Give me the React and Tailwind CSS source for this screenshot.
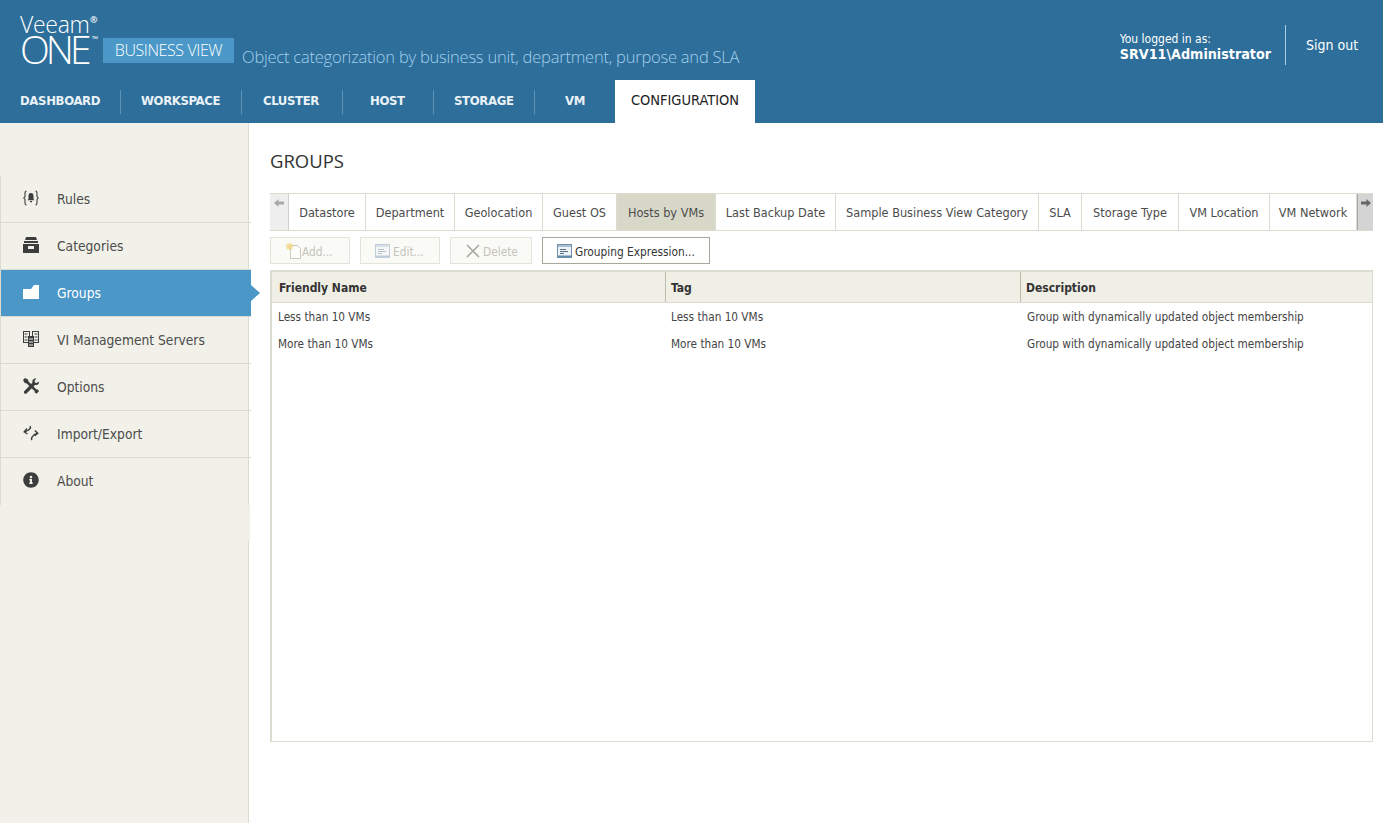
import React from 'react';
import { FaInfoCircle } from 'react-icons/fa';

const tahoma = { fontFamily: '"DejaVu Sans", sans-serif', fontStretch: 'condensed' };
const light = { fontFamily: '"Open Sans", sans-serif', fontStretch: 'normal' };

const navItems = [
  { label: 'DASHBOARD', w: 'w-[121px]', pad: 'pl-5' },
  { label: 'WORKSPACE', w: 'w-[121px]', pad: 'pl-5' },
  { label: 'CLUSTER', w: 'w-[101px]', pad: 'pl-[21px]' },
  { label: 'HOST', w: 'w-[91px]', pad: 'pl-[27px]' },
  { label: 'STORAGE', w: 'w-[101px]', pad: 'pl-5' },
  { label: 'VM', w: 'w-[80px]', pad: 'pl-[30px]', last: true },
];

const tabs = [
  { label: 'Datastore', w: 'w-[77px]' },
  { label: 'Department', w: 'w-[89px]' },
  { label: 'Geolocation', w: 'w-[88px]' },
  { label: 'Guest OS', w: 'w-[74px]' },
  { label: 'Hosts by VMs', w: 'w-[99px]', active: true },
  { label: 'Last Backup Date', w: 'w-[120px]' },
  { label: 'Sample Business View Category', w: 'w-[203px]' },
  { label: 'SLA', w: 'w-[43px]' },
  { label: 'Storage Type', w: 'w-[97px]' },
  { label: 'VM Location', w: 'w-[91px]' },
  { label: 'VM Network', w: 'w-[87px]' },
];

const RulesIcon = () => (
  <svg width="16" height="16" viewBox="0 0 16 16" fill="none">
    <path d="M3.5 1C2 1 2 2 2 3.500v3L.8 8 2 9.500v3C2 14 2 15 3.500 15M12.500 1C14 1 14 2 14 3.500v3L15.200 8 14 9.500v3c0 1.500 0 2.500-1.500 2.500" stroke="#3d3d3d" strokeWidth="1.100" />
    <path d="M8 3c1.800 0 2.500 1.200 2.500 3v3l.8 1.200H4.700L5.500 9V6c0-1.800.7-3 2.500-3zM7 11h2v1.300H7z" fill="#3d3d3d" />
  </svg>
);

const CategoriesIcon = () => (
  <svg width="16" height="16" viewBox="0 0 16 16">
    <path d="M3 0h10l1 3H2zM1 4h14v2H1zM0 7h16v9H0z" fill="#3d3d3d" />
    <rect x="5" y="9" width="6" height="3" fill="#f2f1e9" />
  </svg>
);

const FolderIcon = () => (
  <svg width="16" height="14" viewBox="0 0 16 14">
    <path d="M0 4H8L11 0H16V14H0Z" fill="#fff" />
  </svg>
);

const ServersIcon = () => (
  <svg width="16" height="16" viewBox="0 0 16 16" fill="none" stroke="#3d3d3d">
    <rect x=".5" y=".5" width="6" height="11" />
    <rect x="9.500" y=".5" width="6" height="11" />
    <rect x="5" y="5" width="6" height="11" fill="#3d3d3d" stroke="none" />
    <path d="M6 8h4M6 11h4M6 14h4" stroke="#f2f1e9" />
    <path d="M1.500 3h3M1.500 6h3M1.500 9h3M11.500 3h3M11.500 6h3M11.500 9h3" />
  </svg>
);

const ToolsIcon = () => (
  <svg width="16" height="16" viewBox="0 0 16 16" fill="#3d3d3d">
    <path d="M0 2l2-2 3 1.500.5 2L13.500 11.500l1-.3 1.500 2-2.500 2.500-2-1.500.3-1L3.700 5.500l-2-.5z" />
    <path d="M15.800 3.500c.4 1.500-.2 2.800-1.500 3.300-.7.300-1.300.2-2 0L3.800 15.300c-.7.700-1.700.7-2.400.1-.7-.7-.7-1.700 0-2.400L9.500 4.500c-.3-1-.2-1.800.4-2.700C10.800.500 12.200.200 13.500.500L11.500 2.800l.5 1.800 1.800.5z" />
  </svg>
);

const ImportIcon = () => (
  <svg width="16" height="16" viewBox="0 0 16 16" fill="none" stroke="#3d3d3d" strokeWidth="1.400">
    <path d="M7 1C8.500 3 6 5.500 1.200 6.800M4 3.500L1.200 6.800 4.500 9" />
    <path d="M9 15C7.500 13 10 9.500 14.800 8.200M11.800 5.500L14.800 8.200 11.800 10.800" />
  </svg>
);

const InfoIcon = () => <FaInfoCircle className="w-4 h-4 text-[#3d3d3d]" />;

const sideItems = [
  { label: 'Rules', icon: <RulesIcon /> },
  { label: 'Categories', icon: <CategoriesIcon /> },
  { label: 'Groups', icon: <FolderIcon />, active: true },
  { label: 'VI Management Servers', icon: <ServersIcon /> },
  { label: 'Options', icon: <ToolsIcon /> },
  { label: 'Import/Export', icon: <ImportIcon /> },
  { label: 'About', icon: <InfoIcon /> },
];

const DocIcon = ({ faded }) => (
  <svg width="15" height="14" viewBox="0 0 15 14" className={faded ? 'opacity-40' : ''}>
    <rect x=".5" y=".5" width="14" height="13" fill="#eef3f7" stroke="#6f8fa9" />
    <rect x="1" y="1" width="13" height="2" fill="#a5c0d6" />
    <path d="M3 5.500h6M3 7.500h8M3 9.500h4" stroke="#5a6f80" />
    <rect x="1" y="11.500" width="13" height="1.500" fill="#5f8bb0" />
  </svg>
);

const AddIcon = () => (
  <svg width="17" height="17" viewBox="0 0 17 17" className="opacity-70">
    <path d="M5.500 3.500h7l3 3v10h-10z" fill="#fff" stroke="#b5b5a8" />
    <path d="M4.500 0l.9 2.300L7.700 1.300 6.700 3.600 9 4.500 6.700 5.400 7.700 7.700 5.400 6.700 4.500 9 3.600 6.700 1.300 7.700 2.300 5.400 0 4.500 2.300 3.600 1.300 1.300 3.600 2.300z" fill="#f0cf6c" />
  </svg>
);

const DeleteIcon = () => (
  <svg width="14" height="14" viewBox="0 0 14 14" fill="none" stroke="#a9a9a2" strokeWidth="1.600">
    <path d="M1 1l12 12M13 1L1 13" />
  </svg>
);

const rows = [
  ['Less than 10 VMs', 'Less than 10 VMs', 'Group with dynamically updated object membership'],
  ['More than 10 VMs', 'More than 10 VMs', 'Group with dynamically updated object membership'],
];

export default function App() {
  return (
    <div className="w-[1383px] h-[823px] flex flex-col overflow-hidden bg-white" style={tahoma}>
      {/* header */}
      <header className="h-[123px] shrink-0 bg-[#2d6e9a] flex flex-col">
        <div className="h-20 flex justify-between">
          <div className="flex items-end pl-5 pb-[17px]" style={light}>
            <div className="relative w-[83px] h-[50px] text-white font-light">
              <div className="absolute left-0 top-[1px] text-[23px] leading-[20px] tracking-[-0.3px]">Veeam</div>
              <div className="absolute left-0 top-[22px] text-[39px] leading-[28px] tracking-[-4px]">ONE</div>
              <div className="absolute left-[70px] top-[2px] text-[9px] font-bold leading-[10px]">®</div>
              <div className="absolute left-[72px] top-[22px] text-[8px] font-normal leading-[8px]">™</div>
            </div>
            <div className="h-[25px] w-[131px] bg-[#4a97c8] text-white text-[16px] font-light leading-[25px] text-center tracking-[-0.4px]">BUSINESS VIEW</div>
            <div className="ml-2 text-[#a3d0ee] text-[16.500px] font-light leading-[26px] -mb-[7px] tracking-[-0.22px] whitespace-nowrap">Object categorization by business unit, department, purpose and SLA</div>
          </div>
          <div className="flex items-start pt-[25px] text-white">
            <div className="pt-[7px] pr-[14px] h-10">
              <div className="text-[12px] leading-[14px]">You logged in as:</div>
              <div className="text-[14.200px] leading-[17px] font-bold">SRV11\Administrator</div>
            </div>
            <div className="w-px h-10 bg-[#a9cfe6]"></div>
            <div className="w-[97px] pl-5 pt-[12px] text-[14px] leading-4">Sign out</div>
          </div>
        </div>
        <nav className="h-[43px] flex">
          {navItems.map((n) => (
            <div key={n.label} className={`${n.w} ${n.pad} h-[43px] flex items-center text-[13px] font-bold text-[#eaf2f7] tracking-[-0.35px]`}>
              <span className="flex-1 pb-[2px]">{n.label}</span>
              {!n.last && <span className="w-px h-6 bg-[#5e93b8]"></span>}
            </div>
          ))}
          <div className="w-[140px] h-[43px] bg-white flex items-center justify-center pb-[2px] text-[14.500px] text-[#222]">CONFIGURATION</div>
        </nav>
      </header>

      <div className="flex flex-1">
        {/* sidebar */}
        <aside className="w-[249px] shrink-0 bg-[#f2f1e9] border-r border-[#dcdbd0] pt-[53px]">
          <ul className="border-l border-[#dcdbd0] w-[251px]">
            {sideItems.map((s) => (
              <li
                key={s.label}
                className={`relative h-[47px] border-b last:border-b-0 flex items-start pt-[14px] pl-[22px] text-[13.700px] border-[#dcdbd0] ${
                  s.active ? 'bg-[#4a97c8] text-white' : 'text-[#4c4c4c]'
                }`}
              >
                <span className="w-[34px] h-4 flex items-center shrink-0">{s.icon}</span>
                <span className="leading-[18px]">{s.label}</span>
                {s.active && (
                  <span className="absolute -right-[9px] top-[15px] w-0 h-0 border-y-[8px] border-y-transparent border-l-[9px] border-l-[#4a97c8]"></span>
                )}
              </li>
            ))}
          </ul>
          {/* the strip under the list runs past the sidebar border */}
          <div className="w-[250px] h-[37px] bg-[#f2f1e9]"></div>
        </aside>

        {/* main content */}
        <main className="flex-1 pl-[21px] pr-[10px] pt-[26px]">
          <h1 className="text-[18.500px] leading-6 text-[#333] mb-[20px]" style={light}>GROUPS</h1>

          <div className="flex h-[38px] border-y border-[#dcdbd0] text-[12.600px] text-[#4c4c4c]">
            <div className="w-[19px] bg-[#eeeeee] border-r border-[#cfcfcf] flex justify-center pt-[4px] text-[#aaa]">
              <svg width="10" height="10" viewBox="0 0 10 10" fill="currentColor"><path d="M0 5l4.500-4v2.500H10v3H4.500V9z" /></svg>
            </div>
            {tabs.map((t) => (
              <div key={t.label} className={`${t.w} flex items-center justify-center pt-[2px] border-r border-[#dcdbd0] whitespace-nowrap ${t.active ? 'bg-[#d8d8c9]' : ''}`}>
                {t.label}
              </div>
            ))}
            <div className="flex-1 bg-[#d4d4d4] border-l border-[#a8a8a8] flex justify-center pt-[4px] text-[#666]">
              <svg width="10" height="10" viewBox="0 0 10 10" fill="currentColor"><path d="M10 5L5.500 1v2.500H0v3h5.500V9z" /></svg>
            </div>
          </div>

          <div className="flex gap-[10px] mt-[6px] mb-[6px] text-[11.800px]">
            <button className="w-20 h-[27px] border border-[#e4e3d9] bg-[#fafaf6] flex items-center pl-[14px] text-[#c4c4bc]"><AddIcon /><span className="mt-[4px]">Add...</span></button>
            <button className="w-20 h-[27px] border border-[#e4e3d9] bg-[#fafaf6] flex items-center pl-[14px] gap-[3px] text-[#c4c4bc]"><DocIcon faded /><span className="mt-[4px]">Edit...</span></button>
            <button className="w-[82px] h-[27px] border border-[#e4e3d9] bg-[#fafaf6] flex items-center pl-[15px] gap-[3px] text-[#c4c4bc]"><DeleteIcon /><span className="mt-[4px]">Delete</span></button>
            <button className="w-[168px] h-[27px] border border-[#a8a89c] bg-white flex items-center pl-[14px] gap-[3px] text-[#333]"><DocIcon /><span className="mt-[4px]">Grouping Expression...</span></button>
          </div>

          <div className="h-[472px] border border-[#dcdbd0] border-t-2 border-l-2 text-[#444] text-[11.700px]">
            <div className="flex h-[31px] bg-[#f0efe6] border-b border-[#dcdbd0] font-bold text-[#333] text-[12px] items-stretch">
              <div className="w-[393px] pl-[7px] pt-px flex items-center">Friendly Name</div>
              <div className="w-[355px] pl-[5px] pt-px flex items-center border-l border-[#bdbcae]">Tag</div>
              <div className="flex-1 pl-[5px] pt-px flex items-center border-l border-[#bdbcae]">Description</div>
            </div>
            {rows.map((r) => (
              <div key={r[0]} className="flex h-[27px] items-center pt-[2px]">
                <div className="w-[393px] pl-[6px]">{r[0]}</div>
                <div className="w-[356px] pl-[6px]">{r[1]}</div>
                <div className="flex-1 pl-[6px]">{r[2]}</div>
              </div>
            ))}
          </div>
        </main>
      </div>
    </div>
  );
}
